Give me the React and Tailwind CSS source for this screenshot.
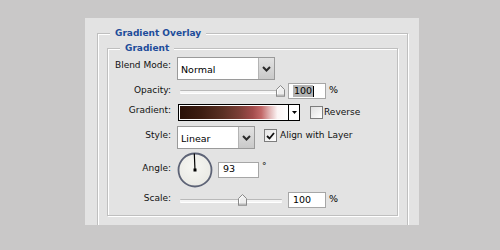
import React from "react";

const font = { fontFamily: '"DejaVu Sans", Verdana, sans-serif' };

function Chevron() {
  return (
    <svg width="9" height="6" viewBox="0 0 9 6">
      <path d="M1 1 L4.5 4.5 L8 1" fill="none" stroke="#2a2a2a" strokeWidth="2" />
    </svg>
  );
}

function Select({ value, width }) {
  return (
    <div className={`flex h-full ${width} border border-[#9a9a9a] bg-white`}>
      <div className="flex flex-1 items-center pl-[3px] pt-[3px] text-[9.5px] text-black">{value}</div>
      <div className="flex w-[16px] items-center justify-center border-l border-[#b4b4b4] bg-gradient-to-b from-[#e2e2e2] to-[#c9c9c9]">
        <Chevron />
      </div>
    </div>
  );
}

function Thumb() {
  return (
    <svg width="9" height="12" viewBox="0 0 9 12">
      <path d="M0.5 11.5 V4.5 L4.5 0.5 L8.5 4.5 V11.5 Z" fill="#eeeeee" stroke="#8a8a8a" />
      <path d="M1.5 10.5 V5 L4.5 2" fill="none" stroke="#ffffff" />
      <rect x="1" y="9.5" width="7" height="2" fill="#b8b8b8" />
    </svg>
  );
}

function Slider({ thumbLeft }) {
  return (
    <div className="relative h-full w-[108px]">
      <div className="absolute left-[3px] top-[7px] h-[3px] w-[102px] rounded-[1px] border-t border-[#b9b9b9] bg-[#f4f4f4] shadow-[0_1px_0_#ffffff]" />
      <div className="absolute top-[2px]" style={{ left: thumbLeft }}>
        <Thumb />
      </div>
    </div>
  );
}

function NumInput({ children, width = "w-[38px]" }) {
  return (
    <div className={`flex h-[16px] ${width} items-center border border-[#a6a6a6] bg-white pl-[4px] text-[9.5px] text-black`}>
      {children}
    </div>
  );
}

function Label({ children, shift = "" }) {
  return (
    <div className={`flex w-[63px] shrink-0 justify-end text-[9px] text-[#111] ${shift}`}>{children}</div>
  );
}

export default function App() {
  return (
    <div className="h-[250px] w-[500px] bg-[#c9c8c8] pl-[85px] pt-[18px]" style={font}>
      <div className="h-[207px] w-[334px] overflow-hidden bg-[#e3e3e3] px-[12px] pt-[15px]">
        <div className="relative h-[220px] w-[311px] border border-[#bfbfbf] shadow-[inset_1px_1px_0_#ffffff,1px_1px_0_#ffffff]">
          <span className="absolute left-[12px] top-[-7px] bg-[#e3e3e3] px-[5px] text-[9px] font-bold leading-[12px] text-[#1d4c9a]">
            Gradient Overlay
          </span>
          <div className="relative ml-[9px] mt-[14px] h-[168px] w-[291px] border border-[#bfbfbf] pt-[8px] shadow-[inset_1px_1px_0_#ffffff,1px_1px_0_#ffffff]">
            <span className="absolute left-[12px] top-[-7px] bg-[#e3e3e3] px-[5px] text-[9px] font-bold leading-[12px] text-[#1d4c9a]">
              Gradient
            </span>

            {/* Blend Mode */}
            <div className="flex h-[23px] items-center">
              <Label shift="-translate-y-[3px]">Blend Mode:</Label>
              <div className="ml-[6px] h-full">
                <Select value="Normal" width="w-[98px]" />
              </div>
            </div>

            {/* Opacity */}
            <div className="mt-[3px] flex h-[16px] items-center">
              <Label>Opacity:</Label>
              <div className="ml-[6px] h-full">
                <Slider thumbLeft={99} />
              </div>
              <div className="ml-[3px]">
                <NumInput>
                  <span className="bg-[#b3b3b3] px-[1px] leading-[12px]">100</span>
                  <span className="h-[11px] w-px bg-black" />
                </NumInput>
              </div>
              <span className="ml-[3px] -translate-y-[1px] text-[9.5px]">%</span>
            </div>

            {/* Gradient */}
            <div className="mt-[5px] flex h-[17px] items-center">
              <Label shift="-translate-y-[2px]">Gradient:</Label>
              <div className="ml-[7px] flex h-full w-[122px] border border-black bg-white">
                <div className="flex-1 border border-white">
                  <div className="h-full w-full bg-[linear-gradient(to_right,#2a1108_0%,#3d1d12_20%,#5a3024_40%,#7a3e36_55%,#a34c4c_68%,#c26868_76%,#e2b6b6_84%,#fbf4f4_91%,#ffffff_100%)]" />
                </div>
                <div className="flex w-[11px] items-center justify-center border-l border-black">
                  <svg width="5" height="3" viewBox="0 0 5 3">
                    <path d="M0 0 H5 L2.5 3 Z" fill="#000" />
                  </svg>
                </div>
              </div>
              <div className="ml-[10px] h-[13px] w-[13px] border border-[#7d7d7d] bg-gradient-to-br from-[#e0e0e0] to-[#ffffff]" />
              <span className="ml-[1px] text-[9px] text-[#111]">Reverse</span>
            </div>

            {/* Style */}
            <div className="mt-[5px] flex h-[23px] items-center">
              <Label shift="-translate-y-[2px]">Style:</Label>
              <div className="ml-[6px] h-full">
                <Select value="Linear" width="w-[78px]" />
              </div>
              <div className="ml-[9px] flex h-[13px] w-[13px] -translate-y-[2px] items-center justify-center border border-[#7d7d7d] bg-gradient-to-br from-[#e4e4e4] to-[#ffffff]">
                <svg width="9" height="8" viewBox="0 0 9 8">
                  <path d="M1 4 L3.5 6.5 L8 1" fill="none" stroke="#111" strokeWidth="1.8" />
                </svg>
              </div>
              <span className="ml-[3px] -translate-y-[2px] text-[9px] text-[#111]">Align with Layer</span>
            </div>

            {/* Angle */}
            <div className="mt-[3px] flex h-[35px] items-center">
              <Label shift="-translate-y-[1px]">Angle:</Label>
              <div className="ml-[6px]">
                <svg width="36" height="36" viewBox="0 0 36 36">
                  <defs>
                    <radialGradient id="dial" cx="0.45" cy="0.4" r="0.6">
                      <stop offset="0" stopColor="#f7f7f3" />
                      <stop offset="1" stopColor="#e9e9e4" />
                    </radialGradient>
                  </defs>
                  <circle cx="18" cy="18" r="16.5" fill="url(#dial)" stroke="#5d6376" strokeWidth="1.8" />
                  <line x1="18" y1="18" x2="17.3" y2="1.5" stroke="#000" strokeWidth="1.2" />
                  <rect x="16.5" y="16.5" width="3" height="3" fill="#000" />
                </svg>
              </div>
              <div className="ml-[5px]">
                <NumInput width="w-[41px]">93</NumInput>
              </div>
              <span className="ml-[3px] -translate-y-[3px] text-[9px]">°</span>
            </div>

            {/* Scale */}
            <div className="mt-[5px] flex h-[16px] items-center">
              <Label shift="-translate-y-[1px]">Scale:</Label>
              <div className="ml-[6px] h-full">
                <Slider thumbLeft={61} />
              </div>
              <div className="ml-[3px]">
                <NumInput>100</NumInput>
              </div>
              <span className="ml-[3px] -translate-y-[1px] text-[9.5px]">%</span>
            </div>
          </div>
        </div>
      </div>
    </div>
  );
}
